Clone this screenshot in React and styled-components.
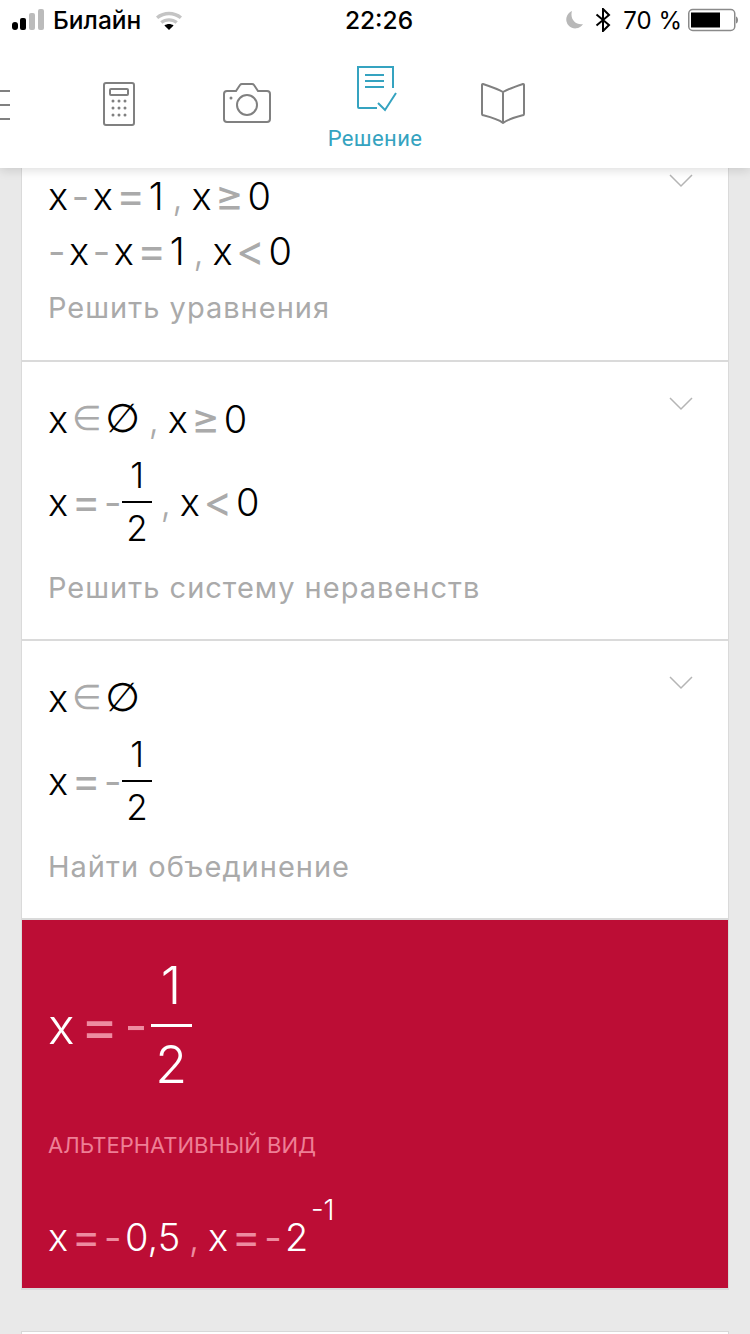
import React from 'react';
import styled, { createGlobalStyle } from 'styled-components';


// styles
const GlobalStyle = createGlobalStyle`
  html, body {
    margin: 0;
    padding: 0;
    background: #e9e9e9;
    font-family: Inter, "Liberation Sans", sans-serif;
  }
`;

const Page = styled.div`
  height: 1334px;
  overflow: hidden;
`;

const Header = styled.header`
  background: #fff;
  box-shadow: 0 2px 10px rgba(0, 0, 0, 0.14);
  height: 168px;
  overflow: hidden;
  position: relative;
  z-index: 2;
`;

const StatusBar = styled.div`
  align-items: center;
  color: #000;
  display: grid;
  font-size: 24.500px;
  font-weight: 500;
  grid-template-columns: 1fr auto 1fr;
  height: 40px;
  padding: 0 12px;
`;

const StatusGroup = styled.div`
  align-items: center;
  display: flex;
  gap: 9px;
  justify-content: ${({ $end }) => ($end ? 'flex-end' : 'flex-start')};
`;

const Clock = styled.span`
  padding-left: 8px;
`;

const Percent = styled.span`
  font-size: 24px;
  font-weight: 400;
  margin: 0 -3px 0 3px;
`;

const StatusIcon = styled.svg`
  display: block;
  flex: none;
  margin-left: ${({ $shift }) => $shift || 0}px;
`;

const TabRow = styled.nav`
  display: flex;
  margin-left: -73px;
`;

const Tab = styled.div`
  align-items: center;
  color: ${({ $active }) => ($active ? '#35a3c0' : '#808080')};
  display: flex;
  flex: 0 0 128px;
  flex-direction: column;
  font-family: Roboto, sans-serif;
  font-size: 22px;
  height: 128px;
  letter-spacing: 0.4px;
`;

const TabIcon = styled.svg`
  display: block;
  flex: none;
  height: 48px;
  margin-top: ${({ $active }) => ($active ? 24 : 40)}px;
  width: 52px;
`;

const TabLabel = styled.span`
  line-height: 26px;
  margin-top: 14px;
`;

const List = styled.main`
  margin: -29px 21px 0;
`;

const Card = styled.section`
  background: ${({ $accent }) => ($accent ? '#bc0d35' : '#fff')};
  border: solid #dadada;
  border-width: 0 1px 2px;
  color: ${({ $accent }) => ($accent ? '#fff' : '#000')};
  display: flex;
  justify-content: space-between;
  padding: 29px 35px ${({ $tail }) => $tail}px 26px;
`;

const Stack = styled.div`
  display: flex;
  flex-direction: column;
`;

const MathLine = styled.div`
  align-items: center;
  display: flex;
  font-size: ${({ $size }) => $size || 38}px;
  font-weight: 300;
  gap: ${({ $gap }) => $gap || 3.500}px;
  height: ${({ $height }) => $height || 55}px;
  line-height: 1;
`;

const Op = styled.span`
  color: ${({ $accent }) => ($accent ? '#ee8ba0' : '#aaa')};
  font-size: ${({ $scale }) => $scale || 1.15}em;
  font-weight: 400;
`;

const Comma = styled.span`
  color: ${({ $accent }) => ($accent ? '#ee8ba0' : '#aaa')};
  margin: 0 5px;
`;

const EmptySet = styled.span`
  font-family: "DejaVu Sans", sans-serif;
  font-size: 1.050em;
  font-weight: 400;
`;

const Fraction = styled.span`
  align-items: center;
  display: inline-flex;
  flex-direction: column;
  font-size: ${({ $size }) => $size || 35}px;
  margin-left: -3px;
`;

const Bar = styled.span`
  background: currentColor;
  display: block;
  height: ${({ $thick }) => $thick || 2}px;
  margin: ${({ $gap }) => $gap || 8}px 0;
  width: ${({ $width }) => $width || 30}px;
`;

const Sup = styled.sup`
  align-self: flex-start;
  font-size: 28px;
  line-height: 1;
  margin: -13px 0 0 -1px;
  vertical-align: baseline;
`;

const Step = styled.p`
  color: #aaa;
  font-size: 29px;
  font-weight: 400;
  letter-spacing: 1px;
  line-height: 36px;
  margin: 12px 0 0;
`;

const AltLabel = styled.p`
  color: #ee7f95;
  font-size: 22px;
  line-height: 28px;
  margin: 29px 0 50px;
  text-transform: uppercase;
`;

const Chevron = styled.svg`
  display: block;
  flex: none;
  height: 14px;
  margin-top: 6px;
  width: 24px;
`;

const NextCard = styled.div`
  background: #fff;
  border: 1px solid #d8d8d8;
  height: 40px;
  margin: 41px 21px 0;
`;


// icons
const Signal = () => (
  <StatusIcon width="32" height="24" viewBox="0 0 32 24">
    <rect x="0" y="14" width="6" height="8" rx="3" fill="#000" />
    <rect x="8" y="10" width="6" height="12" rx="2" fill="#000" />
    <rect x="17" y="5" width="6" height="17" rx="2" fill="#bbb" />
    <rect x="26" y="1" width="6" height="21" rx="2" fill="#bbb" />
  </StatusIcon>
);

const Wifi = () => (
  <StatusIcon $shift={5} width="28" height="20" viewBox="0 0 28 20">
    <path d="M1 6.500C8.500 .3 19.500 .3 27 6.500l-2.200 2.600C18.600 4 9.400 4 3.200 9.100z" fill="#c4c4c4" />
    <path d="M5.200 11.200c5.100-4.100 12.500-4.100 17.600 0l-2.200 2.500c-3.800-3-9.400-3-13.200 0z" fill="#c4c4c4" />
    <path d="M9.400 15.400c2.700-2 6.500-2 9.200 0L14 20z" fill="#000" />
  </StatusIcon>
);

const Moon = () => (
  <StatusIcon width="20" height="20" viewBox="0 0 20 20">
    <path d="M8 1a9 9 0 1 0 11 13C12 15.500 5.500 9 8 1z" fill="#b8b8b8" />
  </StatusIcon>
);

const Bluetooth = () => (
  <StatusIcon $shift={2} width="16" height="24" viewBox="0 0 16 24">
    <path d="M1.500 6.500 14 17l-6 6V1l6 6L1.500 17.500" fill="none" stroke="#000" strokeWidth="2" />
  </StatusIcon>
);

const Battery = () => (
  <StatusIcon width="50" height="24" viewBox="0 0 50 24">
    <rect x="0.750" y="1.500" width="46" height="21" rx="4" fill="none" stroke="#8a8a8a" strokeWidth="1.500" />
    <rect x="3" y="4.500" width="29" height="15" fill="#000" />
    <path d="M48 8.500c1.500.5 2 2 2 3.500s-.5 3-2 3.500z" fill="#8a8a8a" />
  </StatusIcon>
);

const MenuIcon = () => (
  <TabIcon viewBox="0 0 52 48" fill="none" stroke="#808080" strokeWidth="2">
    <path d="M0 11h45M0 25h45M0 39h45" />
  </TabIcon>
);

const CalculatorIcon = () => (
  <TabIcon viewBox="0 0 52 48" fill="none" stroke="#808080" strokeWidth="2">
    <rect x="11" y="3" width="30" height="42" rx="2" />
    <rect x="17" y="9" width="18" height="6" rx="1" />
    <g fill="#808080" stroke="none">
      {[21, 28, 35].map((y) => [20, 26, 32].map((x) => (
        <circle key={`${x}-${y}`} cx={x} cy={y} r="1.500" />
      )))}
    </g>
  </TabIcon>
);

const CameraIcon = () => (
  <TabIcon viewBox="0 0 52 48" fill="none" stroke="#808080" strokeWidth="2">
    <path d="M6 11h9l4-6c.500-.700 1-1 2-1h10c1 0 1.500.300 2 1l4 6h9c1.700 0 3 1.300 3 3v25c0 1.700-1.300 3-3 3H6c-1.700 0-3-1.300-3-3V14c0-1.700 1.300-3 3-3z" />
    <circle cx="26" cy="25" r="10" />
    <circle cx="10" cy="18" r="1.500" fill="#808080" stroke="none" />
  </TabIcon>
);

const SolutionIcon = () => (
  <TabIcon $active viewBox="0 0 52 48" fill="none" stroke="#35a3c0" strokeWidth="2">
    <path d="M28 44H10c-.800 0-1-.400-1-1V3h35v21" />
    <path d="M16 11h19M16 17h19M16 23h19" />
    <path d="M29 39l7 7 11-17" />
  </TabIcon>
);

const BookIcon = () => (
  <TabIcon viewBox="0 0 52 48" fill="none" stroke="#808080" strokeWidth="2">
    <path d="M26 12C21 9 12 6 6 4c-.700-.200-1 .300-1 1v29c0 .600.200 1 1 1.200C13 37 21 39 26 43c5-4 13-6 20-7.800.800-.200 1-.600 1-1.200V5c0-.700-.300-1.200-1-1C40 6 31 9 26 12zM26 12v31" strokeLinejoin="round" />
  </TabIcon>
);

const ChevronDown = () => (
  <Chevron viewBox="0 0 24 14" fill="none" stroke="#b5b5b5" strokeWidth="1.500">
    <path d="M1 1l11 11L23 1" />
  </Chevron>
);


// view
const Half = () => (
  <Fraction>
    <span>1</span>
    <Bar />
    <span>2</span>
  </Fraction>
);

const Minus = ({ accent }) => <Op $accent={accent} $scale={1}>-</Op>;

const Equation = ({ children, title, tail = 33 }) => (
  <Card $tail={tail}>
    <Stack>
      {children}
      <Step>{title}</Step>
    </Stack>
    <ChevronDown />
  </Card>
);

const App = () => (
  <Page>
    <GlobalStyle />
    <Header>
      <StatusBar>
        <StatusGroup>
          <Signal />
          <span>Билайн</span>
          <Wifi />
        </StatusGroup>
        <Clock>22:26</Clock>
        <StatusGroup $end>
          <Moon />
          <Bluetooth />
          <Percent>70 %</Percent>
          <Battery />
        </StatusGroup>
      </StatusBar>
      <TabRow>
        <Tab><MenuIcon /></Tab>
        <Tab><CalculatorIcon /></Tab>
        <Tab><CameraIcon /></Tab>
        <Tab $active>
          <SolutionIcon />
          <TabLabel>Решение</TabLabel>
        </Tab>
        <Tab><BookIcon /></Tab>
      </TabRow>
    </Header>
    <List>
      <Equation title="Решить уравнения" tail={34}>
        <MathLine>
          <span>x</span><Minus /><span>x</span><Op>=</Op><span>1</span>
          <Comma>,</Comma><span>x</span><Op>≥</Op><span>0</span>
        </MathLine>
        <MathLine>
          <Minus /><span>x</span><Minus /><span>x</span><Op>=</Op><span>1</span>
          <Comma>,</Comma><span>x</span><Op>&lt;</Op><span>0</span>
        </MathLine>
      </Equation>
      <Equation title="Решить систему неравенств">
        <MathLine>
          <span>x</span><Op $scale={0.9}>∈</Op><EmptySet>∅</EmptySet>
          <Comma>,</Comma><span>x</span><Op>≥</Op><span>0</span>
        </MathLine>
        <MathLine $height={112}>
          <span>x</span><Op>=</Op><Minus /><Half />
          <Comma>,</Comma><span>x</span><Op>&lt;</Op><span>0</span>
        </MathLine>
      </Equation>
      <Equation title="Найти объединение">
        <MathLine>
          <span>x</span><Op $scale={0.9}>∈</Op><EmptySet>∅</EmptySet>
        </MathLine>
        <MathLine $height={112}>
          <span>x</span><Op>=</Op><Minus /><Half />
        </MathLine>
      </Equation>
      <Card $accent $tail={24}>
        <Stack>
          <MathLine $size={50} $height={153} $gap={6}>
            <span>x</span><Op $accent>=</Op><Minus accent />
            <Fraction $size={52}>
              <span>1</span>
              <Bar $width={41} $thick={3} $gap={12} />
              <span>2</span>
            </Fraction>
          </MathLine>
          <AltLabel>Альтернативный вид</AltLabel>
          <MathLine>
            <span>x</span><Op $accent>=</Op><Minus accent /><span>0,5</span>
            <Comma $accent>,</Comma><span>x</span><Op $accent>=</Op><Minus accent /><span>2</span>
            <Sup>-1</Sup>
          </MathLine>
        </Stack>
      </Card>
    </List>
    <NextCard />
  </Page>
);


// exports
export default App;
